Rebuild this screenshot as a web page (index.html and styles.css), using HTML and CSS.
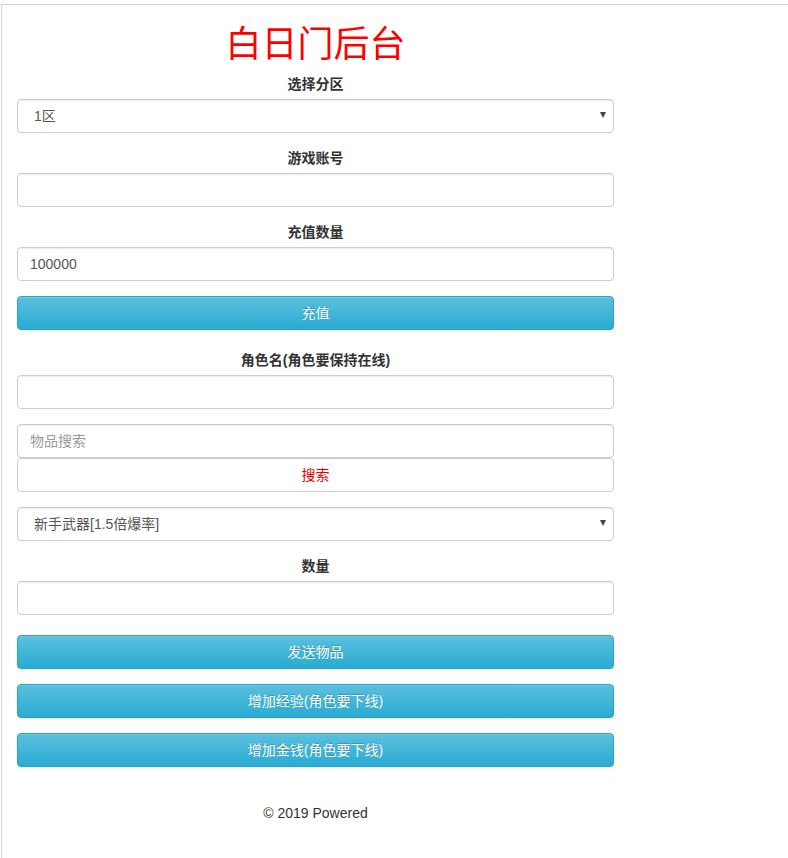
FILE: index.html
```html
<!DOCTYPE html>
<html lang="zh-CN">
<head>
<meta charset="utf-8">
<title>白日门后台</title>
<link rel="stylesheet" href="styles.css">
</head>
<body>
<div class="frame">
  <div class="container">
    <h1 class="title">白日门后台</h1>
    <div class="group">
      <label class="label">选择分区</label>
      <div class="select-wrap">
        <select class="control select"><option>1区</option></select>
        <span class="arrow"></span>
      </div>
    </div>
    <div class="group">
      <label class="label">游戏账号</label>
      <input class="control" type="text">
    </div>
    <div class="group">
      <label class="label">充值数量</label>
      <input class="control" type="text" value="100000">
    </div>
    <button class="btn btn-info">充值</button>

    <div class="group top-gap">
      <label class="label">角色名(角色要保持在线)</label>
      <input class="control" type="text">
    </div>
    <div class="group">
      <input class="control" type="text" placeholder="物品搜索">
      <button class="btn btn-default">搜索</button>
    </div>
    <div class="group">
      <div class="select-wrap">
        <select class="control select"><option>新手武器[1.5倍爆率]</option></select>
        <span class="arrow"></span>
      </div>
    </div>
    <div class="group">
      <label class="label">数量</label>
      <input class="control" type="text">
    </div>
    <div class="actions">
      <button class="btn btn-info">发送物品</button>
      <button class="btn btn-info">增加经验(角色要下线)</button>
      <button class="btn btn-info">增加金钱(角色要下线)</button>
    </div>
    <p class="footer">© 2019 Powered</p>
  </div>
</div>
</body>
</html>
```

FILE: styles.css
```css
html, body {
  margin: 0;
  padding: 0;
  background: #fff;
}
body {
  font-family: "Liberation Sans", Arial, "Noto Sans CJK SC", sans-serif;
  font-size: 14px;
  line-height: 20px;
  color: #333;
}
.frame {
  margin: 4px 0 0 1px;
  border-top: 1px solid #d0d0d0;
  border-left: 1px solid #d8d8d8;
  min-height: 860px;
}
.container {
  width: 597px;
  padding: 0 15px;
  box-sizing: content-box;
}
.title {
  margin: 20px 0 9px;
  font-size: 36px;
  line-height: 40px;
  font-weight: normal;
  color: #f00;
  text-align: center;
}
.group {
  margin-bottom: 15px;
}
.top-gap {
  margin-top: 20px;
}
.label {
  display: block;
  margin-bottom: 5px;
  font-weight: bold;
  text-align: center;
  color: #333;
}
.control {
  display: block;
  width: 100%;
  height: 34px;
  box-sizing: border-box;
  margin: 0;
  padding: 6px 12px;
  font-family: inherit;
  font-size: 14px;
  line-height: 20px;
  color: #555;
  background: #fff;
  border: 1px solid #ccc;
  border-radius: 4px;
  box-shadow: inset 0 1px 1px rgba(0,0,0,.075);
  outline: none;
}
.control::placeholder {
  color: #999;
}
.select-wrap {
  position: relative;
}
.select {
  -webkit-appearance: none;
  appearance: none;
  padding-left: 16px;
}
.arrow {
  position: absolute;
  right: 8px;
  top: 13px;
  width: 0;
  height: 0;
  border-left: 3.5px solid transparent;
  border-right: 3.5px solid transparent;
  border-top: 6px solid #444;
  pointer-events: none;
}
.btn {
  display: block;
  width: 100%;
  height: 34px;
  box-sizing: border-box;
  margin: 0;
  padding: 6px 12px;
  font-family: inherit;
  font-size: 14px;
  line-height: 20px;
  text-align: center;
  border-radius: 4px;
  cursor: pointer;
}
.btn-info {
  color: #fff;
  background-image: linear-gradient(to bottom, #5bc0de 0, #2aabd2 100%);
  border: 1px solid #28a4c9;
  text-shadow: 0 -1px 0 rgba(0,0,0,.2);
  box-shadow: inset 0 1px 0 rgba(255,255,255,.15), 0 1px 1px rgba(0,0,0,.075);
}
.btn-default {
  color: #e00;
  background: #fff;
  border: 1px solid #ccc;
}
.actions {
  margin-top: 20px;
  display: flex;
  flex-direction: column;
  gap: 15px;
}
.footer {
  margin: 36px 0 0;
  text-align: center;
  color: #333;
}
```
